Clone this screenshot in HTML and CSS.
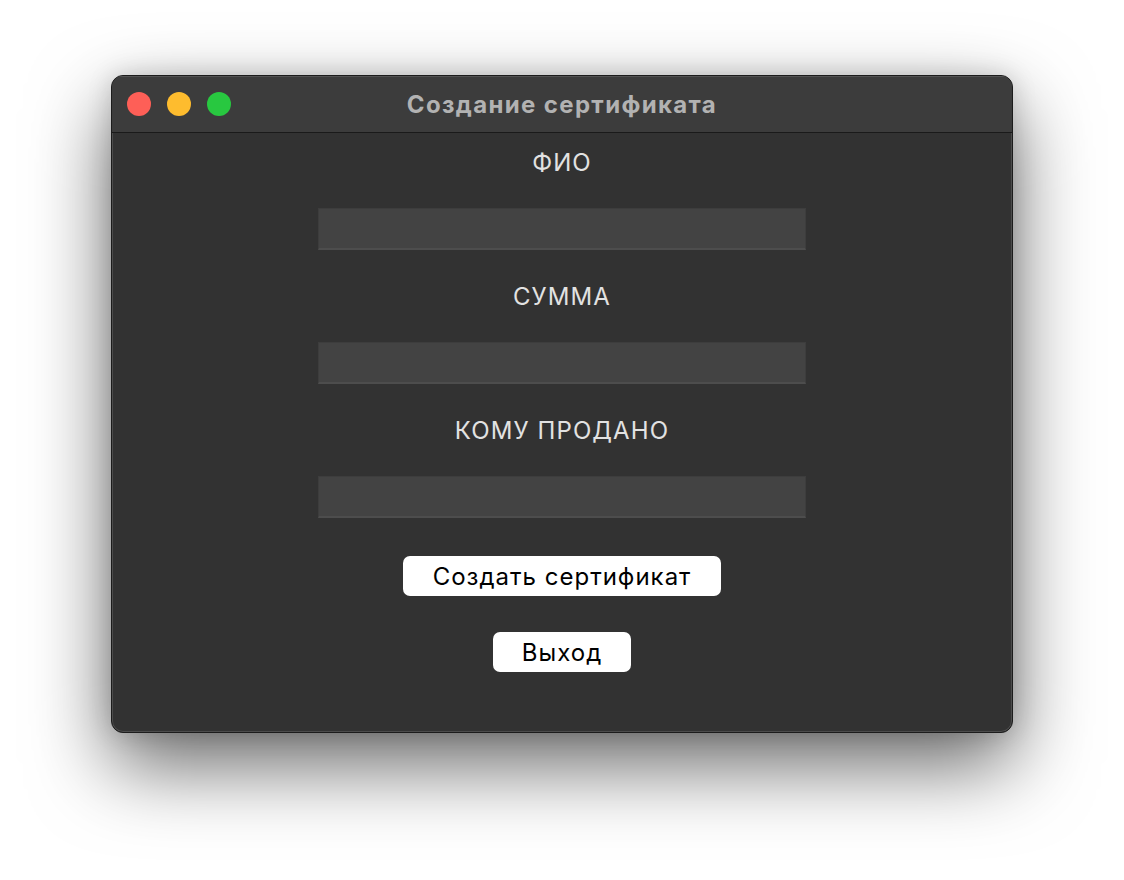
FILE: index.html
```html
<!DOCTYPE html>
<html lang="ru">
<head>
<meta charset="utf-8">
<title>Создание сертификата</title>
<link rel="stylesheet" href="styles.css">
</head>
<body>
<div class="window">
  <div class="titlebar">
    <div class="lights">
      <span class="light red"></span>
      <span class="light yellow"></span>
      <span class="light green"></span>
    </div>
    <div class="title">Создание сертификата</div>
  </div>
  <div class="content">
    <div class="label">ФИО</div>
    <div class="field"></div>
    <div class="label">СУММА</div>
    <div class="field"></div>
    <div class="label">КОМУ ПРОДАНО</div>
    <div class="field"></div>
    <button class="btn btn-create">Создать сертификат</button>
    <button class="btn btn-exit">Выход</button>
  </div>
</div>
</body>
</html>
```
FILE: styles.css
```css
html, body {
  margin: 0;
  padding: 0;
  background: #ffffff;
  font-family: Inter, "Liberation Sans", sans-serif;
}
body {
  padding: 75px 0 0 111px;
  height: 880px;
  box-sizing: border-box;
}
.window {
  width: 902px;
  height: 658px;
  box-sizing: border-box;
  border: 1px solid #1c1c1c;
  border-radius: 12px;
  background: #323232;
  box-shadow: inset 0 0 0 1px rgba(255,255,255,0.13), 0 32px 80px rgba(0,0,0,0.6), 0 0 24px rgba(0,0,0,0.15);
  overflow: hidden;
  display: flex;
  flex-direction: column;
}
.titlebar {
  height: 56px;
  flex: none;
  background: #3c3c3c;
  border-bottom: 1px solid #1a1a1a;
  display: flex;
  align-items: center;
  position: relative;
  box-shadow: inset 0 1px 0 rgba(255,255,255,0.12);
}
.lights {
  display: flex;
  gap: 16px;
  padding-left: 15px;
}
.light {
  width: 24px;
  height: 24px;
  border-radius: 50%;
  display: block;
}
.red { background: #fe5f57; }
.yellow { background: #febc2e; }
.green { background: #28c840; }
.title {
  position: absolute;
  left: 0;
  right: 0;
  top: 0;
  bottom: 0;
  display: flex;
  align-items: center;
  justify-content: center;
  font-weight: 700;
  font-size: 24px;
  letter-spacing: 1.35px;
  color: #b2b2b2;
  pointer-events: none;
}
.content {
  display: flex;
  flex-direction: column;
  align-items: center;
  padding-top: 15px;
}
.label {
  height: 30px;
  line-height: 30px;
  font-size: 24px;
  letter-spacing: 1.1px;
  color: #e2e2e2;
  margin-bottom: 30px;
}
.field {
  width: 488px;
  height: 42px;
  box-sizing: border-box;
  background: #434343;
  border: 1px solid #3d3d3d;
  border-bottom: 2px solid #4d4d4d;
  margin-bottom: 32px;
}
.field:nth-of-type(6) { margin-bottom: 38px; }
.btn {
  font-family: Inter, "Liberation Sans", sans-serif;
  font-size: 24px;
  letter-spacing: 1px;
  color: #000;
  background: #fff;
  border: none;
  border-radius: 7px;
  height: 40px;
  padding: 0;
  cursor: default;
}
.btn-create { width: 318px; margin-bottom: 36px; }
.btn-exit { width: 138px; }
```
